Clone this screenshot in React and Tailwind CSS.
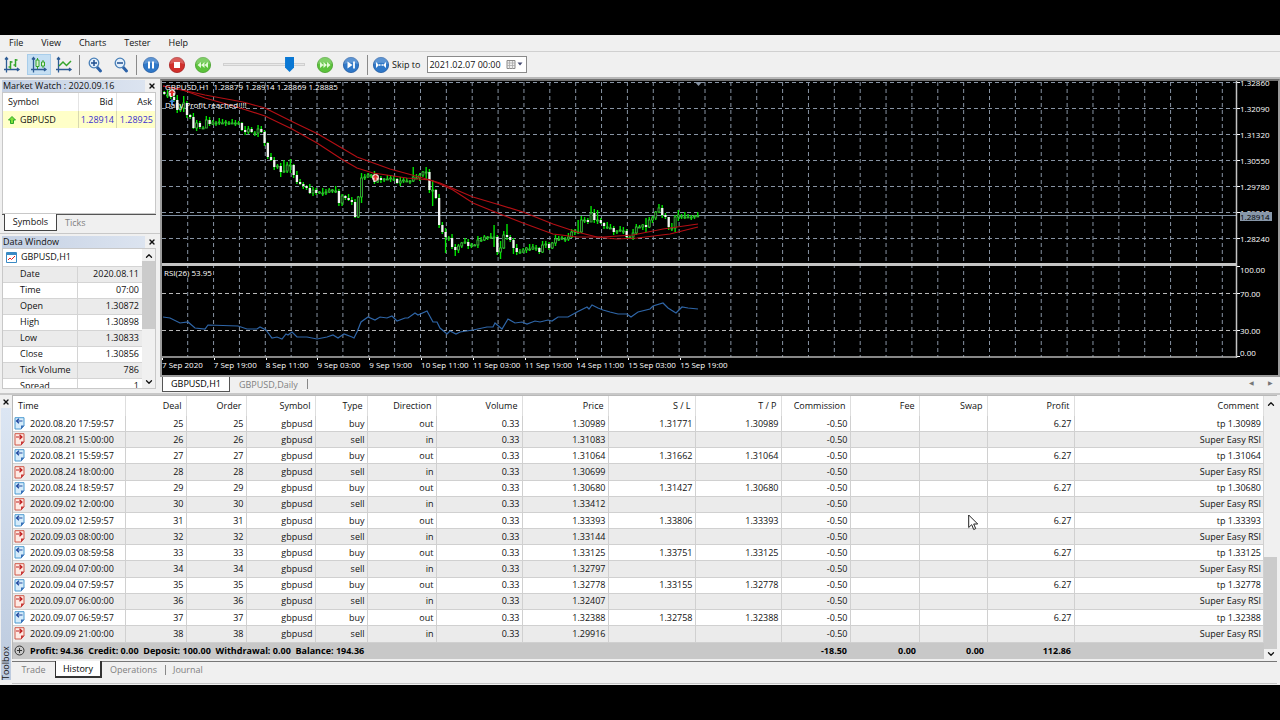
import { ChevronUp, ChevronDown, X } from 'lucide-react'

const PANEL_ROWS = [
  ['Date', '2020.08.11'],
  ['Time', '07:00'],
  ['Open', '1.30872'],
  ['High', '1.30898'],
  ['Low', '1.30833'],
  ['Close', '1.30856'],
  ['Tick Volume', '786'],
  ['Spread', '1'],
]

const COLUMNS = [
  { label: 'Time', width: 'w-[112px]' },
  { label: 'Deal', width: 'w-[61px]' },
  { label: 'Order', width: 'w-[60px]' },
  { label: 'Symbol', width: 'w-[69px]' },
  { label: 'Type', width: 'w-[52px]' },
  { label: 'Direction', width: 'w-[69px]' },
  { label: 'Volume', width: 'w-[86px]' },
  { label: 'Price', width: 'w-[86px]' },
  { label: 'S / L', width: 'w-[87px]' },
  { label: 'T / P', width: 'w-[86px]' },
  { label: 'Commission', width: 'w-[69px]' },
  { label: 'Fee', width: 'w-[69px]' },
  { label: 'Swap', width: 'w-[68px]' },
  { label: 'Profit', width: 'w-[87px]' },
  { label: 'Comment', width: 'w-auto' },
]

// time, deal, price, stop loss, take profit (sl/tp only on closing deals)
const DEALS = [
  ['2020.08.20 17:59:57', 25, '1.30989', '1.31771', '1.30989'],
  ['2020.08.21 15:00:00', 26, '1.31083'],
  ['2020.08.21 15:59:57', 27, '1.31064', '1.31662', '1.31064'],
  ['2020.08.24 18:00:00', 28, '1.30699'],
  ['2020.08.24 18:59:57', 29, '1.30680', '1.31427', '1.30680'],
  ['2020.09.02 12:00:00', 30, '1.33412'],
  ['2020.09.02 12:59:57', 31, '1.33393', '1.33806', '1.33393'],
  ['2020.09.03 08:00:00', 32, '1.33144'],
  ['2020.09.03 08:59:58', 33, '1.33125', '1.33751', '1.33125'],
  ['2020.09.04 07:00:00', 34, '1.32797'],
  ['2020.09.04 07:59:57', 35, '1.32778', '1.33155', '1.32778'],
  ['2020.09.07 06:00:00', 36, '1.32407'],
  ['2020.09.07 06:59:57', 37, '1.32388', '1.32758', '1.32388'],
  ['2020.09.09 21:00:00', 38, '1.29916'],
]

const TIMES = ['7 Sep 2020', '7 Sep 19:00', '8 Sep 11:00', '9 Sep 03:00', '9 Sep 19:00', '10 Sep 11:00',
  '11 Sep 03:00', '11 Sep 19:00', '14 Sep 11:00', '15 Sep 03:00', '15 Sep 19:00']

const PRICES = ['1.32090', '1.31320', '1.30550', '1.29780', '1.29010', '1.28240']

// close of every bar, in chart units (y grows downwards)
const CLOSES = [
  94, 95, 97, 100, 110, 108, 103, 115, 117, 128, 123, 127, 128, 120, 124, 122, 123, 122, 123, 122,
  123, 123, 123, 123, 130, 132, 129, 132, 133, 129, 132, 143, 157, 160, 167, 166, 172, 171, 165, 165,
  175, 182, 184, 186, 188, 193, 190, 193, 192, 193, 192, 190, 190, 191, 203, 196, 198, 200, 202, 217,
  197, 178, 177, 175, 175, 182, 178, 180, 179, 179, 178, 179, 183, 181, 180, 181, 181, 177, 178, 175,
  172, 172, 190, 190, 198, 225, 232, 237, 238, 247, 250, 246, 243, 242, 246, 245, 245, 240, 240, 237,
  237, 237, 237, 252, 248, 235, 237, 240, 248, 252, 252, 250, 248, 249, 247, 248, 252, 245, 244, 248,
  243, 239, 239, 238, 239, 237, 232, 231, 232, 220, 220, 222, 213, 220, 220, 223, 226, 227, 228, 232,
  231, 230, 231, 237, 237, 233, 227, 227, 225, 227, 220, 218, 212, 208, 215, 217, 227, 228, 217, 215,
  216, 217, 217, 217, 216, 216,
]

// bars whose wick sticks out further than usual: [high, low]
const LONG_WICKS = {
  4: [95, 113], 6: [96, 112], 13: [116, 128], 29: [125, 137], 36: [163, 177], 37: [160, 173], 39: [159, 173],
  54: [189, 206], 59: [199, 218], 61: [173, 203], 77: [167, 182], 81: [167, 180], 83: [180, 206], 87: [228, 253],
  90: [244, 256], 102: [225, 247], 104: [241, 259], 106: [224, 240], 108: [238, 254], 128: [220, 234],
  132: [206, 222], 134: [210, 224], 149: [218, 232], 153: [204, 213], 156: [217, 230], 158: [215, 232], 159: [210, 221],
}

const MA_FAST = '163,86 180,89 205,98 240,108 265,116 292,129 317,143 343,160 357,168 373,173 407,178 430,180 440,184 453,190 473,203 500,214 523,223 553,234 577,237 603,237 633,235 663,229 698,224'
const MA_SLOW = '163,86 205,95 243,102 265,108 293,122 318,134 357,157 390,169 423,178 440,183 473,197 500,205 523,212 553,224 577,232 597,237 617,239 637,238 670,234 698,227'
const RSI = '163,317 170,318 180,323 188,322 195,328 205,329 208,325 238,326 247,329 257,329 260,327 266,330 272,338 277,337 282,339 286,334 288,335 292,332 297,337 307,337 317,339 327,337 333,335 338,338 344,334 352,337 354,338 357,332 361,322 368,317 375,320 380,317 387,318 392,316 397,321 405,318 408,318 415,313 418,315 427,311 433,322 437,322 440,328 447,334 450,331 456,334 460,332 473,330 487,327 493,327 495,323 502,329 508,319 515,323 522,322 527,324 535,321 540,322 548,320 552,321 558,317 568,317 577,312 587,307 589,309 592,305 598,308 603,310 610,312 618,314 627,314 631,317 638,312 650,309 653,306 663,303 668,308 676,313 682,307 688,308 698,309'

const candles = CLOSES.map((close, i) => {
  const open = i ? CLOSES[i - 1] : 92
  const spread = 1 + ((i * 7) % 4)
  const [high, low] = LONG_WICKS[i] || [Math.min(open, close) - spread, Math.max(open, close) + 1 + ((i * 5) % 3)]
  return { x: 164.3 + i * 3.233, open, close, high, low }
})

const gridX = Array.from({ length: 41 }, (_, i) => 187.7 + i * 25.865)
const gridY = [82.5, 108.5, 134.5, 160.5, 186.5, 212.5, 238.5]

function Chart() {
  return (
    <svg viewBox="162 81 1078 277" preserveAspectRatio="none" className="absolute inset-0 h-full w-full" aria-label="GBPUSD H1 candles and RSI">
      <g stroke="#8793a3" strokeDasharray="4 3">
        {gridX.map(x => <path key={x} d={`M${x} 82V357`} />)}
        {gridY.map(y => <path key={y} d={`M162 ${y}H1236`} />)}
      </g>
      <g stroke="#b8b8b8" strokeDasharray="4 3">
        <path d="M162 293.5H1236M162 330.5H1236" />
      </g>
      <path d="M162 215.5H1236" stroke="#8090a2" />

      {/* candles */}
      {candles.map(({ x, open, close, high, low }) => (
        <g key={x}>
          <path d={`M${x} ${high}V${low}`} stroke="#00e400" strokeWidth="1.4" />
          {close > open + 1
            ? <rect x={x - 1.1} y={open} width="2.3" height={close - open} fill="#f4f4f4" />
            : <rect x={x - 1} y={close} width="2" height={Math.max(open - close, 1)} fill="#111" stroke="#39c639" strokeWidth="0.8" />}
        </g>
      ))}
      <g fill="none" stroke="#b40f14" strokeWidth="1.2">
        <polyline points={MA_FAST} />
        <polyline points={MA_SLOW} />
      </g>

      {/* deal markers */}
      <circle cx="172" cy="93" r="3.5" fill="#e8e0dc" />
      <path d="M172 90l3 3h-2v3h-2v-3h-2z" fill="#e0302a" />
      <path d="M172 99l3 3h-2v3h-2v-3h-2z" fill="#3d86d8" />
      <circle cx="375.5" cy="177.5" r="3.5" fill="#f3d9d2" />
      <path d="M375.5 174.5l3 3h-2v3h-2v-3h-2z" fill="#e0302a" />
      <path d="M695 82h7l-3.5 4z" fill="#8793a3" />

      <polyline points={RSI} fill="none" stroke="#2f66a8" strokeWidth="1.2" />

      {/* pane separator and axes */}
      <path d="M162 264.5H1237" stroke="#c4c4c4" strokeWidth="3" />
      <path d="M162 357H1237" stroke="#b5b5b5" strokeWidth="1.5" />
      <path d="M1236.5 81V358" stroke="#c4c4c4" strokeWidth="1.5" />
      <path d="M1237 82.5h3M1237 108.5h3M1237 134.5h3M1237 160.5h3M1237 186.5h3M1237 212.5h3M1237 238.5h3M1237 266.5h3M1237 293.5h3M1237 330.5h3M1237 356.5h3" stroke="#fff" />
    </svg>
  )
}

function ChartWindow() {
  return (
    <section className="flex min-h-0 flex-1 flex-col border-2 border-[#9b9b9b] border-t-[#707070] bg-black text-[8px] leading-[10px] font-medium text-white">
      <div className="flex min-h-0 flex-1">
        <div className="relative flex-1">
          <Chart />
          <div className="absolute top-px left-[3px] whitespace-pre">GBPUSD,H1  1.28879 1.28914 1.28869 1.28885</div>
          <div className="absolute top-[19px] left-[3px]">Daily Profit reached !!!</div>
          <div className="absolute top-[187px] left-[2px] bg-black">RSI(26) 53.95</div>
        </div>
        <div className="relative flex w-[38px] flex-col">
          <div className="h-[15px] leading-[4px]">1.32860</div>
          {PRICES.map(p => <div key={p} className="h-[26px] leading-[26px]">{p}</div>)}
          <div className="mt-[11px] h-[14px] leading-[14px]">100.00</div>
          <div className="h-[33px] leading-[33px]">70.00</div>
          <div className="h-[41px] leading-[41px]">30.00</div>
          <div className="leading-[4px]">0.00</div>
          <div className="absolute top-[131px] left-0 w-[32px] bg-[#8797a9] leading-[9px] text-black">1.28914</div>
        </div>
      </div>
      <div className="grid h-[17px] w-[570px] grid-cols-11 whitespace-nowrap">
        {TIMES.map(t => (
          <div key={t} className="flex flex-col leading-[9px]">
            <span className="h-[2px] w-px bg-white" />
            {t}
          </div>
        ))}
      </div>
    </section>
  )
}

function PanelTitle({ children }) {
  return (
    <div className="mr-px flex h-[13px] items-center">
      <h2 className="flex-1 bg-gradient-to-r from-[#c4d0e3] to-[#dce4f0] pl-px text-[9px] leading-[12px]">{children}</h2>
      <button aria-label="Close" className="grid w-[14px] place-items-center"><X size={8} strokeWidth={4} /></button>
    </div>
  )
}

function MarketWatch() {
  return (
    <section className="flex flex-col border-b border-[#c8c8c8] pl-[2px]">
      <PanelTitle>Market Watch : 2020.09.16</PanelTitle>
      <div className="mr-[4px] h-[122px] border border-[#c8c8c8] bg-white">
        <table className="w-full table-fixed">
          <thead>
            <tr className="h-[18px]">
              <th className="w-[75px] pl-[5px] text-left font-normal">Symbol</th>
              <th className="border-l border-[#e4e4e4] pr-[3px] text-right font-normal">Bid</th>
              <th className="border-l border-[#e4e4e4] pr-[3px] text-right font-normal">Ask</th>
            </tr>
          </thead>
          <tbody>
            <tr className="h-[17px] bg-[#ffffc8]">
              <td className="pl-[5px]">
                <span className="flex items-center gap-1">
                  <svg width="8" height="8" viewBox="0 0 8 8"><path d="M4 .5L7.5 4H5.5v3.5h-3V4H.5z" fill="#7fe03a" stroke="#2aa52a" /></svg>
                  GBPUSD
                </span>
              </td>
              <td className="border-l border-[#d8d8b0] pr-[2px] text-right text-[#3a2fd0]">1.28914</td>
              <td className="border-l border-[#d8d8b0] pr-[2px] text-right text-[#3a2fd0]">1.28925</td>
            </tr>
          </tbody>
        </table>
      </div>
      <div className="mr-[4px] flex h-[19px]">
        <span className="w-[2px] border-t border-[#555]" />
        <button className="h-[17px] w-[53px] border border-t-0 border-[#444] bg-white">Symbols</button>
        <button className="h-[17px] flex-1 border-t border-[#555] pl-2 text-left text-[#808080]">Ticks</button>
      </div>
    </section>
  )
}

function DataWindow() {
  return (
    <section className="flex min-h-0 flex-1 flex-col pt-px pb-[4px] pl-[2px]">
      <PanelTitle>Data Window</PanelTitle>
      <div className="mr-[4px] flex min-h-0 flex-1 overflow-hidden border border-[#c8c8c8] bg-white">
        <div className="flex-1 overflow-hidden">
          <table className="w-full table-fixed">
            <colgroup>
              <col className="w-[74px]" />
              <col />
            </colgroup>
            <thead>
              <tr className="h-[17px]">
                <th colSpan={2} className="pl-[3px] text-left font-normal">
                  <span className="flex items-center gap-1">
                    <svg width="11" height="11" viewBox="0 0 11 11">
                      <path d="M.5 .5h10v10H.5z" fill="#fff" stroke="#3b8ac4" />
                      <path d="M1 2h9" stroke="#3b8ac4" strokeWidth="2" />
                      <path d="M2 8l2-2 1.5 1.5L9 4" fill="none" stroke="#e02020" />
                    </svg>
                    GBPUSD,H1
                  </span>
                </th>
              </tr>
            </thead>
            <tbody>
              {PANEL_ROWS.map(([label, value]) => (
                <tr key={label} className="h-[16px] border-t border-[#d4d4d4] odd:bg-[#ebebeb]">
                  <th className="pl-[17px] text-left font-normal whitespace-nowrap">{label}</th>
                  <td className="border-l border-[#d4d4d4] pr-[3px] text-right">{value}</td>
                </tr>
              ))}
            </tbody>
          </table>
        </div>
        <div className="flex w-[13px] flex-col items-center justify-between bg-[#f0f0f0]">
          <ChevronUp size={10} strokeWidth={3} className="mt-[2px] shrink-0" />
          <span className="mb-auto h-[68px] w-full bg-[#cbcbcb]" />
          <ChevronDown size={10} strokeWidth={3} className="mb-px shrink-0" />
        </div>
      </div>
    </section>
  )
}

const Axes = () => <path d="M3.5 2v14.5M1 13.5h15M2 3.5l1.5-2L5 3.5M14 12l2 1.5-2 1.5" fill="none" stroke="#2c5b94" strokeWidth="1.3" />

function Disc({ color, label, children }) {
  const fill = { blue: '#2f78c8', red: '#d0302c', green: '#5cc23c' }[color]
  const edge = { blue: '#2058a0', red: '#a82020', green: '#46a02c' }[color]
  return (
    <button aria-label={label} className="shrink-0">
      <svg width="18" height="18" viewBox="0 0 18 18">
        <circle cx="9" cy="9" r="7.6" fill={fill} stroke={edge} strokeWidth="0.8" />
        <path d="M2 8a7 7 0 0 1 14 0q-7-2.5-14 0z" fill="#fff" opacity=".22" />
        {children}
      </svg>
    </button>
  )
}

function Zoom({ plus }) {
  return (
    <button aria-label={plus ? 'Zoom in' : 'Zoom out'} className="shrink-0">
      <svg width="16" height="18" viewBox="0 0 16 18" fill="none">
        <path d="M9.5 10.5l4 4.5" stroke="#2c62a8" strokeWidth="3" strokeLinecap="round" />
        <circle cx="7" cy="7" r="4.8" fill="#e3effb" stroke="#4a80b8" strokeWidth="1.3" />
        <path d={plus ? 'M4 7h6M7 4v6' : 'M4 7h6'} stroke="#1f4f90" strokeWidth="1.5" />
      </svg>
    </button>
  )
}

const Separator = () => <span className="h-[20px] w-px shrink-0 bg-[#8a8a8a]" />

function Toolbar() {
  return (
    <div className="flex h-[28px] items-center border-t border-[#d0d0d0] border-b-2 border-b-[#b8b8b8] pl-[2px]">
      <button aria-label="Bar chart" className="w-[25px] pl-px">
        <svg width="18" height="18" viewBox="0 0 18 18"><Axes /><path d="M7.5 5v8M5.5 11h2M7.5 6h2M12.5 3v8M10.5 9h2M12.5 4h2" stroke="#35a52c" strokeWidth="1.5" /></svg>
      </button>
      <button aria-label="Candlesticks" className="grid h-[21px] w-[24px] place-items-center border border-[#a8cdea] bg-[#c5dff3]">
        <svg width="18" height="18" viewBox="0 0 18 18"><Axes /><path d="M7.5 2v11M13 4v8" stroke="#35a52c" /><path d="M6 4h3v6.5H6zM11.5 6h3v4h-3z" fill="#d9f2d0" stroke="#35a52c" /></svg>
      </button>
      <button aria-label="Line chart" className="mr-[4px] w-[24px] pl-[4px]">
        <svg width="18" height="18" viewBox="0 0 18 18"><Axes /><path d="M4 10l4-4 3.5 3.5L16 5" fill="none" stroke="#35a52c" strokeWidth="1.5" /></svg>
      </button>
      <Separator />
      <div className="flex gap-[10px] px-[7px]">
        <Zoom plus />
        <Zoom />
      </div>
      <Separator />
      <div className="flex items-center gap-2 pr-[7px] pl-[5px]">
        <Disc color="blue" label="Pause"><path d="M7 5.5v7M11 5.5v7" stroke="#fff" strokeWidth="2" /></Disc>
        <Disc color="red" label="Stop"><path d="M6 6h6v6H6z" fill="#fff" /></Disc>
        <Disc color="green" label="Slower"><path d="M7 6v6L3.5 9zM10.5 6v6L7 9zM14 6v6l-3.5-3z" fill="#e4fbd8" /></Disc>
        <input
          type="range"
          aria-label="Speed"
          defaultValue={86}
          className="mx-[3px] h-[16px] w-[82px] appearance-none bg-transparent [&::-webkit-slider-runnable-track]:h-[3px] [&::-webkit-slider-runnable-track]:border [&::-webkit-slider-runnable-track]:border-[#d0d0d0] [&::-webkit-slider-runnable-track]:bg-[#e8e8e8] [&::-webkit-slider-thumb]:-mt-[7px] [&::-webkit-slider-thumb]:h-[15px] [&::-webkit-slider-thumb]:w-[9px] [&::-webkit-slider-thumb]:appearance-none [&::-webkit-slider-thumb]:bg-[#0a78d4] [&::-webkit-slider-thumb]:[clip-path:polygon(0_0,100%_0,100%_70%,50%_100%,0_70%)]"
        />
        <Disc color="green" label="Faster"><path d="M4 6v6l3.5-3zM7.5 6v6L11 9zM11 6v6l3.5-3z" fill="#e4fbd8" /></Disc>
        <Disc color="blue" label="Step"><path d="M5.5 5.5v7l5-3.5z" fill="#fff" /><path d="M12 5.5v7" stroke="#fff" strokeWidth="1.8" /></Disc>
      </div>
      <Separator />
      <div className="flex items-center pl-[4px]">
        <Disc color="blue" label="Skip"><path d="M4 6v6l3-3zM14 6v6l-3-3z" fill="#fff" /><path d="M7 9h4" stroke="#fff" strokeWidth="1.5" strokeDasharray="1.5 1" /></Disc>
        <label htmlFor="skip" className="mr-[7px] ml-[2px]">Skip to</label>
        <div className="flex h-[17px] w-[100px] items-center border border-[#8a8a8a] bg-white px-px">
          <input id="skip" defaultValue="2021.02.07 00:00" className="w-[77px] outline-none" />
          <svg width="18" height="11" viewBox="0 0 18 11">
            <path d="M1 1.5h8v8H1z" fill="#eee" stroke="#8a8a8a" />
            <path d="M1 4h8M1 6.5h8M3.5 2v8M6.5 2v8" stroke="#aaa" strokeWidth=".8" />
            <path d="M11.5 3.5h5L14 6.5z" fill="#444a70" />
          </svg>
        </div>
      </div>
    </div>
  )
}

function DealIcon({ out }) {
  return (
    <svg width="11" height="13" viewBox="0 0 11 13" fill="none" className="shrink-0">
      <path d="M1 .7h9v8l-3 3.3H1z" fill={out ? '#d6ecfa' : '#fdeae4'} stroke={out ? '#4a9ad0' : '#d05848'} />
      <path d="M10.5 8.5H7v4z" fill={out ? '#3a70b8' : '#c83838'} />
      <path d={out ? 'M8.5 4h-6M5 1.8L2.5 4 5 6.2' : 'M2 4h6M5.5 1.8L8 4 5.5 6.2'} stroke={out ? '#2048a0' : '#c02020'} strokeWidth="1.2" />
    </svg>
  )
}

function History() {
  return (
    <table className="h-full w-full flex-1 table-fixed bg-white">
      <thead>
        <tr className="h-[20px]">
          {COLUMNS.map(({ label, width }, i) => (
            <th key={label} className={`${width} border-r border-[#dedede] font-normal ${i ? 'pr-1 text-right' : 'pl-[5px] text-left'}`}>{label}</th>
          ))}
        </tr>
      </thead>
      <tbody>
        {DEALS.map(([time, deal, price, sl, tp]) => {
          const cells = [deal, deal, 'gbpusd', sl ? 'buy' : 'sell', sl ? 'out' : 'in', '0.33', price, sl, tp, '-0.50', '', '',
            sl ? '6.27' : '', sl ? `tp ${tp}` : 'Super Easy RSI']
          return (
            <tr key={deal} className="even:border-y even:border-[#d0d0d0] even:bg-[#ebebeb]">
              <td className="border-r border-[#d0d0d0] pl-px whitespace-nowrap">
                <span className="flex items-center gap-[5px]"><DealIcon out={!!sl} />{time}</span>
              </td>
              {cells.map((c, i) => (
                <td key={i} className="border-r border-[#d0d0d0] pr-[2px] text-right">{c}</td>
              ))}
            </tr>
          )
        })}
      </tbody>
      <tfoot>
        <tr className="h-[17px] bg-[#c8c8c8] font-bold text-black">
          <td colSpan={10} className="pl-px">
            <span className="flex items-center gap-[5px] whitespace-pre">
              <svg width="11" height="11" viewBox="0 0 11 11" fill="none" stroke="#333"><circle cx="5.5" cy="5.5" r="4.5" /><path d="M3 5.5h5M5.5 3v5" /></svg>
              Profit: 94.36  Credit: 0.00  Deposit: 100.00  Withdrawal: 0.00  Balance: 194.36
            </span>
          </td>
          <td className="pr-[3px] text-right">-18.50</td>
          <td className="pr-[3px] text-right">0.00</td>
          <td className="pr-[3px] text-right">0.00</td>
          <td className="pr-[3px] text-right">112.86</td>
          <td />
        </tr>
      </tfoot>
    </table>
  )
}

function Toolbox() {
  return (
    <section className="flex shrink-0 border-t-2 border-[#c8c8c8] pr-[3px]">
      <div className="flex w-[12px] flex-col items-center">
        <button aria-label="Close toolbox" className="grid h-[13px] place-items-center"><X size={8} strokeWidth={4} /></button>
        <div className="mb-[5px] flex w-[10px] flex-1 rotate-180 items-center justify-start bg-gradient-to-b from-[#bccade] to-[#dce6f3] leading-[10px] [writing-mode:vertical-rl]">Toolbox</div>
      </div>
      <div className="flex-1">
        <div className="flex h-[264px] border-t border-l border-[#b8b8b8]">
          <History />
          <div className="flex w-[13px] flex-col items-center bg-[#f0f0f0]">
            <ChevronUp size={10} strokeWidth={3} className="mt-[3px] shrink-0" />
            <span className="mt-auto h-[92px] w-full bg-[#cbcbcb]" />
            <ChevronDown size={10} strokeWidth={3} className="shrink-0" />
          </div>
        </div>
        <nav className="mt-[2px] flex h-[17px] text-[#808080]">
          <button className="w-[43px] border-t border-[#777]">Trade</button>
          <button className="w-[47px] border border-t-0 border-r-2 border-b-2 border-[#333] bg-white text-black">History</button>
          <button className="w-[63px] border-t border-[#777]">Operations</button>
          <div className="flex flex-1 items-center border-t border-[#777]">
            <span className="h-[10px] w-px bg-[#888]" />
            <button className="px-[7px]">Journal</button>
          </div>
        </nav>
        <div className="mt-[5px] mb-px border-b border-[#c4c4c4]" />
      </div>
    </section>
  )
}

export default function App() {
  return (
    <div className="relative flex h-screen min-h-[720px] flex-col bg-black py-[35px] font-['Open_Sans','Noto_Sans',sans-serif] text-[9px] leading-[12px] text-[#111]">
      <div className="flex min-h-0 flex-1 flex-col bg-[#f0f0f0]">
        <nav className="flex h-[16px] items-center gap-[18px] px-[9px]">
          {['File', 'View', 'Charts', 'Tester', 'Help'].map(m => <button key={m}>{m}</button>)}
        </nav>
        <Toolbar />
        <main className="flex min-h-0 flex-1">
          <aside className="flex w-[160px] shrink-0 flex-col">
            <MarketWatch />
            <DataWindow />
          </aside>
          <div className="flex min-w-0 flex-1 flex-col">
            <ChartWindow />
            <nav className="flex h-[16px] items-start text-[#808080]">
              <span className="w-[2px]" />
              <button className="h-[15px] w-[68px] border border-t-0 border-[#555] bg-white text-black">GBPUSD,H1</button>
              <button className="h-[15px] px-[9px]">GBPUSD,Daily</button>
              <span className="mt-[2px] h-[10px] w-px bg-[#888]" />
              <span className="mr-[7px] ml-auto flex gap-[14px] text-[6px] text-[#777]"><button>◀</button><button>▶</button></span>
            </nav>
          </div>
        </main>
        <Toolbox />
      </div>
      {/* mouse pointer */}
      <svg width="11" height="17" viewBox="0 0 11 17" className="absolute top-[514px] left-[968px]"><path d="M.7 1v12.5l3-2.8 2 4.8 2-.9-2-4.6h4z" fill="#fff" stroke="#222" /></svg>
    </div>
  )
}
